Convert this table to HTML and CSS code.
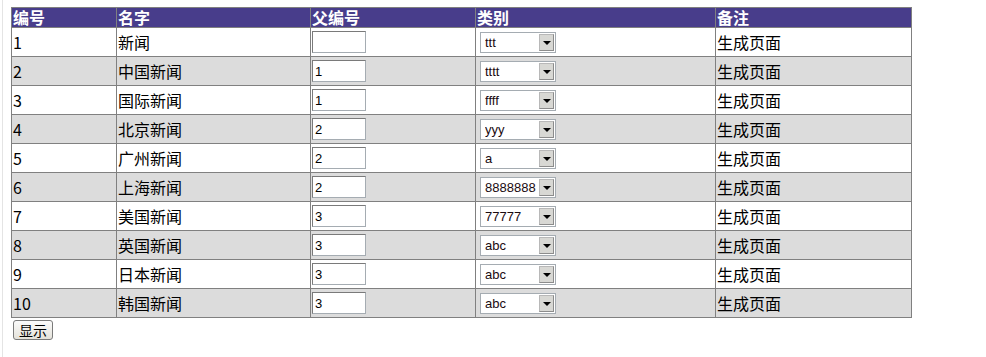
FILE: index.html
```html
<!DOCTYPE html>
<html>
<head>
<meta charset="utf-8">
<title>栏目</title>
<link rel="stylesheet" href="styles.css">
</head>
<body>
<table class="grid">
  <colgroup>
    <col class="c-id"><col class="c-name"><col class="c-parent"><col class="c-type"><col class="c-note">
  </colgroup>
  <thead>
    <tr><th>编号</th><th>名字</th><th>父编号</th><th>类别</th><th>备注</th></tr>
  </thead>
  <tbody>
    <tr><td>1</td><td>新闻</td><td><input class="txt" type="text" value=""></td><td><span class="sel"><select><option>ttt</option></select><span class="btn"></span></span></td><td>生成页面</td></tr>
    <tr class="alt"><td>2</td><td>中国新闻</td><td><input class="txt" type="text" value="1"></td><td><span class="sel"><select><option>tttt</option></select><span class="btn"></span></span></td><td>生成页面</td></tr>
    <tr><td>3</td><td>国际新闻</td><td><input class="txt" type="text" value="1"></td><td><span class="sel"><select><option>ffff</option></select><span class="btn"></span></span></td><td>生成页面</td></tr>
    <tr class="alt"><td>4</td><td>北京新闻</td><td><input class="txt" type="text" value="2"></td><td><span class="sel"><select><option>yyy</option></select><span class="btn"></span></span></td><td>生成页面</td></tr>
    <tr><td>5</td><td>广州新闻</td><td><input class="txt" type="text" value="2"></td><td><span class="sel"><select><option>a</option></select><span class="btn"></span></span></td><td>生成页面</td></tr>
    <tr class="alt"><td>6</td><td>上海新闻</td><td><input class="txt" type="text" value="2"></td><td><span class="sel"><select><option>8888888</option></select><span class="btn"></span></span></td><td>生成页面</td></tr>
    <tr><td>7</td><td>美国新闻</td><td><input class="txt" type="text" value="3"></td><td><span class="sel"><select><option>77777</option></select><span class="btn"></span></span></td><td>生成页面</td></tr>
    <tr class="alt"><td>8</td><td>英国新闻</td><td><input class="txt" type="text" value="3"></td><td><span class="sel"><select><option>abc</option></select><span class="btn"></span></span></td><td>生成页面</td></tr>
    <tr><td>9</td><td>日本新闻</td><td><input class="txt" type="text" value="3"></td><td><span class="sel"><select><option>abc</option></select><span class="btn"></span></span></td><td>生成页面</td></tr>
    <tr class="alt"><td>10</td><td>韩国新闻</td><td><input class="txt" type="text" value="3"></td><td><span class="sel"><select><option>abc</option></select><span class="btn"></span></span></td><td>生成页面</td></tr>
  </tbody>
</table>
<div class="actions"><button class="show" type="button">显示</button></div>
</body>
</html>
```

FILE: styles.css
```css
html { background: #fff; }
body {
  margin: 0 0 0 2px;
  padding: 7px 0 0 8px;
  border-left: 1px solid #e4e4e4;
  min-height: 100vh;
  box-sizing: border-box;
  font-family: "Noto Sans CJK SC", "Liberation Sans", sans-serif;
  font-size: 16px;
  color: #000;
}
.grid {
  border-collapse: collapse;
  table-layout: fixed;
  width: 900px;
  border: 1px solid #808080;
}
.c-id { width: 105px; }
.c-name { width: 194px; }
.c-parent { width: 165px; }
.c-type { width: 240px; }
.c-note { width: 196px; }
.grid th {
  background: #483d8b;
  color: #fff;
  font-weight: bold;
  text-align: left;
  height: 19px;
  padding: 0 1px;
  line-height: 19px;
  border: 1px solid #808080;
  border-top: 0;
  font-size: 16px;
}
.grid td {
  height: 28px;
  padding: 0 1px;
  line-height: 20px;
  border: 1px solid #808080;
  vertical-align: middle;
  white-space: nowrap;
}
.grid tr.alt td { background: #dcdcdc; }
.txt {
  display: block;
  box-sizing: border-box;
  width: 54px;
  height: 22px;
  margin: 0;
  padding: 0 2px;
  border: 1px solid #a5acb2;
  border-top-color: #7a7a7a;
  border-left-color: #7a7a7a;
  background: #fff;
  font-family: "Liberation Sans", Arial, sans-serif;
  font-size: 13px;
}
.sel {
  position: relative;
  display: block;
  margin-left: 3px;
  width: 76px;
  height: 21px;
}
.sel select {
  display: block;
  appearance: none;
  -webkit-appearance: none;
  box-sizing: border-box;
  width: 76px;
  height: 21px;
  margin: 0;
  padding: 0 0 0 4px;
  border: 1px solid #a5acb2;
  border-radius: 0;
  background: #fff;
  color: #1a0a10;
  font-family: "Liberation Sans", Arial, sans-serif;
  font-size: 13px;
}
.sel .btn {
  position: absolute;
  right: 2px;
  top: 2px;
  width: 15px;
  height: 17px;
  box-sizing: border-box;
  background: #d8d8d4;
  border: 1px solid #b8b8b8;
  border-right-color: #8c8c8c;
  border-bottom-color: #8c8c8c;
  pointer-events: none;
}
.sel .btn::after {
  content: "";
  position: absolute;
  left: 3px;
  top: 6px;
  border-left: 4px solid transparent;
  border-right: 4px solid transparent;
  border-top: 4px solid #000;
}
.actions { padding: 2px 0 0 2px; }
.show {
  display: block;
  box-sizing: border-box;
  height: 20px;
  width: 40px;
  padding: 0;
  border: 1px solid #7a7a7a;
  border-radius: 3px;
  background: linear-gradient(#fbfbfb, #e4e2da);
  font-family: "Noto Sans CJK SC", sans-serif;
  font-size: 14px;
  line-height: 16px;
  color: #000;
}
```
